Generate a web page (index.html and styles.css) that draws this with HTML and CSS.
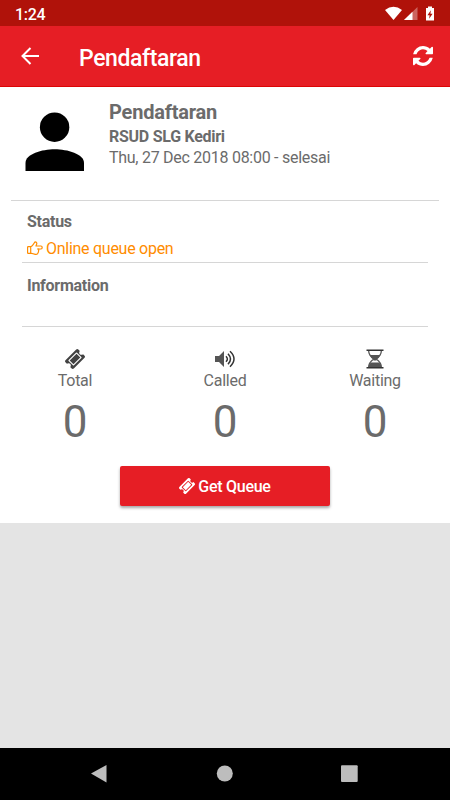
FILE: index.html
```html
<!DOCTYPE html>
<html lang="en">
<head>
    <meta charset="UTF-8">
    <meta name="viewport" content="width=device-width, initial-scale=1.0">
    <title>Pendaftaran</title>
    <link rel="stylesheet" href="styles.css">
</head>
<body>
    <svg class="defs" width="0" height="0">
        <symbol id="ticket" viewBox="54 54 1685 1685">
            <path d="M1024 452l316 316-572 572-316-316zm-211 979l618-618q19-19 19-45t-19-45l-362-362q-18-18-45-18t-45 18L361 979q-19 19-19 45t19 45l362 362q18 18 45 18t45-18zm889-637l-907 908q-37 37-90.5 37t-90.5-37l-126-126q56-56 56-136t-56-136-136-56-136 56L91 1178q-37-37-37-90.5T91 997L998 91q37-37 90.5-37t90.5 37l125 125q-56 56-56 136t56 136 136 56 136-56l126 125q37 37 37 90.5t-37 90.5z"/>
        </symbol>
    </svg>

    <div class="status-bar">
        <span class="clock">1:24</span>
        <svg class="system-icons" width="50" height="16" viewBox="0 0 50 16" fill="#fff">
            <path d="M0 4Q8.500-2.500 17 4L8.500 14z"/>
            <path opacity=".35" d="M19 14L32.500 1V14z"/>
            <path d="M19 14L27.500 5.700V14z"/>
            <path d="M41 2h2V.500h4V2h2v12.500h-8z"/>
            <path fill="#b0120a" d="M45.900 4.200l-3.500 5h2.200l-.5 3.500 3.500-5h-2.200z"/>
        </svg>
    </div>

    <header class="toolbar">
        <svg class="back" width="18" height="18" viewBox="0 0 18 18" fill="none" stroke="#fff" stroke-width="2">
            <path d="M9.500 1L1.500 9l8 8M1.500 9H18"/>
        </svg>
        <h1>Pendaftaran</h1>
        <svg class="refresh" width="20" height="20" viewBox="0 0 1536 1536" fill="#fff">
            <path d="M1511 928q0 5-1 7-64 268-268 434.500T764 1536q-146 0-282.500-55T238 1324l-129 129q-19 19-45 19t-45-19-19-45V960q0-26 19-45t45-19h448q26 0 45 19t19 45-19 45l-137 137q71 66 161 102t187 36q134 0 250-65t186-179q11-17 53-117 8-23 30-23h192q13 0 22.500 9.500t9.500 22.500zm25-800v448q0 26-19 45t-45 19h-448q-26 0-45-19t-19-45 19-45l138-138Q969 256 768 256q-134 0-250 65T332 500q-11 17-53 117-8 23-30 23H50q-13 0-22.500-9.500T18 608v-7q65-268 270-434.500T768 0q146 0 284 55.500T1297 212l130-129q19-19 45-19t45 19 19 45z"/>
        </svg>
    </header>

    <main class="card">
        <section class="profile">
            <svg class="avatar" width="60" height="60" viewBox="0 0 60 60">
                <circle cx="29.600" cy="15.200" r="14.700"/>
                <path d="M.5 59V51C.5 42 17 37.300 29.700 37.300S59 42 59 51v8z"/>
            </svg>
            <div>
                <h2>Pendaftaran</h2>
                <h3>RSUD SLG Kediri</h3>
                <p>Thu, 27 Dec 2018 08:00 - selesai</p>
            </div>
        </section>

        <section class="row status">
            <h3>Status</h3>
            <p>
                <svg width="16" height="14" viewBox="0 0 16 14" fill="none" stroke="#ff8c00" stroke-width="1.200" stroke-linejoin="round">
                    <path d="M3.700 5.600H1.200Q.6 5.600.6 6.200V11.700Q.6 12.300 1.200 12.300H4.500C6 12.300 6.500 13.300 8.400 13.300H9.300Q11 13.300 11 11.800Q11.800 11 11.500 9.900Q12 9 11.700 8H13.900Q15.200 7.700 15.200 6.400T13.900 5H9C9.200 3.700 10 3.200 9.800 2Q9.600.7 8 .8C7 2 6.500 3.300 5.500 4.300Q4.700 5.400 3.700 5.600V12"/>
                    <path d="M10 8h2"/>
                </svg>
                <span>Online queue open</span>
            </p>
        </section>

        <section class="row information">
            <h3>Information</h3>
        </section>

        <section class="counters">
            <div class="counter">
                <svg width="20" height="20" fill="#424242"><use href="#ticket"/></svg>
                <span>Total</span>
                <strong>0</strong>
            </div>
            <div class="counter">
                <svg width="20" height="20" viewBox="0 0 20 20" fill="#555">
                    <path d="M0 7h4l5-5v16l-5-5H0z"/>
                    <path fill="none" stroke="#333" stroke-width="1.500" d="M11 7.200q2.800 2.800 0 5.600M13 4.700q5 5.300 0 10.600M15 2.300q8 7.700 0 15.400"/>
                </svg>
                <span>Called</span>
                <strong>0</strong>
            </div>
            <div class="counter">
                <svg width="20" height="20" viewBox="0 0 20 20" fill="#555">
                    <path fill="#333" d="M1.500.500h17V2h-17zM1.500 18h17v1.500h-17z"/>
                    <path fill="none" stroke="#555" stroke-width="1.300" d="M3.700 2C3.700 6 6 8 8.700 10C6 12 3.700 14 3.700 18M16.300 2C16.300 6 14 8 11.300 10C14 12 16.300 14 16.300 18"/>
                    <path d="M4.500 6h11q-1.500 2.500-3.700 4h-3.600Q6 8.500 4.500 6zM8.500 9.500h3v2h-3zM3.700 18q.2-2.700 2-4.500h8.600q1.800 1.800 2 4.500z"/>
                </svg>
                <span>Waiting</span>
                <strong>0</strong>
            </div>
        </section>

        <button class="get-queue" type="button">
            <svg width="16" height="16" fill="#fff"><use href="#ticket"/></svg>
            <span>Get Queue</span>
        </button>
    </main>

    <nav class="nav-bar">
        <svg width="450" height="52" viewBox="0 0 450 52" fill="#bdbdbd">
            <path d="M91 25.500L106.500 17v17.500z"/>
            <circle cx="224.800" cy="25.500" r="8"/>
            <rect x="341" y="17.200" width="16.700" height="16.700" rx="1"/>
        </svg>
    </nav>
</body>
</html>
```
FILE: styles.css
```css
* {
    box-sizing: border-box;
}
body {
    margin: 0;
    height: 800px;
    display: flex;
    flex-direction: column;
    overflow: hidden;
    background: #e4e4e4;
    color: #6b6b6b;
    font-family: Roboto, sans-serif;
    font-size: 16px;
    letter-spacing: -0.27px;
}
h1, h2, h3, p {
    margin: 0;
}
svg {
    display: block;
    flex: none;
}
.defs {
    position: absolute;
}
.status-bar {
    height: 26px;
    padding: 1px 15px 0 15px;
    display: flex;
    align-items: center;
    justify-content: space-between;
    background: #b0120a;
    color: #fff;
}
.clock {
    padding-top: 1px;
    font-weight: 500;
}
.toolbar {
    height: 61px;
    padding: 0 17px 0 21px;
    display: flex;
    align-items: center;
    background: #e61e25;
    border-bottom: 1px solid #dc0505;
    color: #fff;
}
.toolbar h1 {
    margin-left: 40px;
    padding-top: 5px;
    font-size: 23px;
    font-weight: 500;
    letter-spacing: -0.4px;
}
.refresh {
    margin-left: auto;
}
.card {
    height: 436px;
    background: #fff;
}
.profile {
    height: 114px;
    margin: 0 11px;
    padding: 13px 14px 0;
    display: flex;
    border-bottom: 1px solid #d6d6d6;
}
.avatar {
    margin: 12px 24px 0 0;
}
.profile h2 {
    font-size: 20px;
    line-height: 25px;
    letter-spacing: -0.2px;
}
.profile p {
    line-height: 21px;
}
.profile h3 {
    padding-top: 1px;
}
h3 {
    font-size: 16px;
    line-height: 21px;
    letter-spacing: -0.27px;
}
.row {
    margin: 0 22px;
    padding: 10px 5px 0;
    border-bottom: 1px solid #d6d6d6;
}
.status {
    height: 62px;
}
.status p {
    margin-top: 6px;
    display: flex;
    align-items: center;
    gap: 3px;
    line-height: 21px;
    color: #ff8c00;
}
.status svg {
    margin-top: -2px;
}
.information {
    height: 64px;
    padding-top: 12px;
}
.counters {
    height: 139px;
    padding-top: 22px;
    display: grid;
    grid-template-columns: repeat(3, 1fr);
}
.counter {
    display: flex;
    flex-direction: column;
    align-items: center;
}
.counter span {
    margin-top: 1px;
    line-height: 21px;
}
.counter strong {
    margin-top: 5px;
    font-size: 44px;
    font-weight: 400;
    line-height: 52px;
}
.get-queue {
    width: 210px;
    height: 40px;
    margin: 0 auto;
    padding: 0;
    display: flex;
    align-items: center;
    justify-content: center;
    gap: 3px;
    border: 0;
    border-radius: 2px;
    background: #e61e25;
    box-shadow: 0 2px 3px rgba(0, 0, 0, 0.35);
    color: #fff;
    font-family: inherit;
    font-size: 16px;
    font-weight: 500;
    letter-spacing: -0.27px;
}
.nav-bar {
    height: 52px;
    margin-top: auto;
    background: #000;
}
```
